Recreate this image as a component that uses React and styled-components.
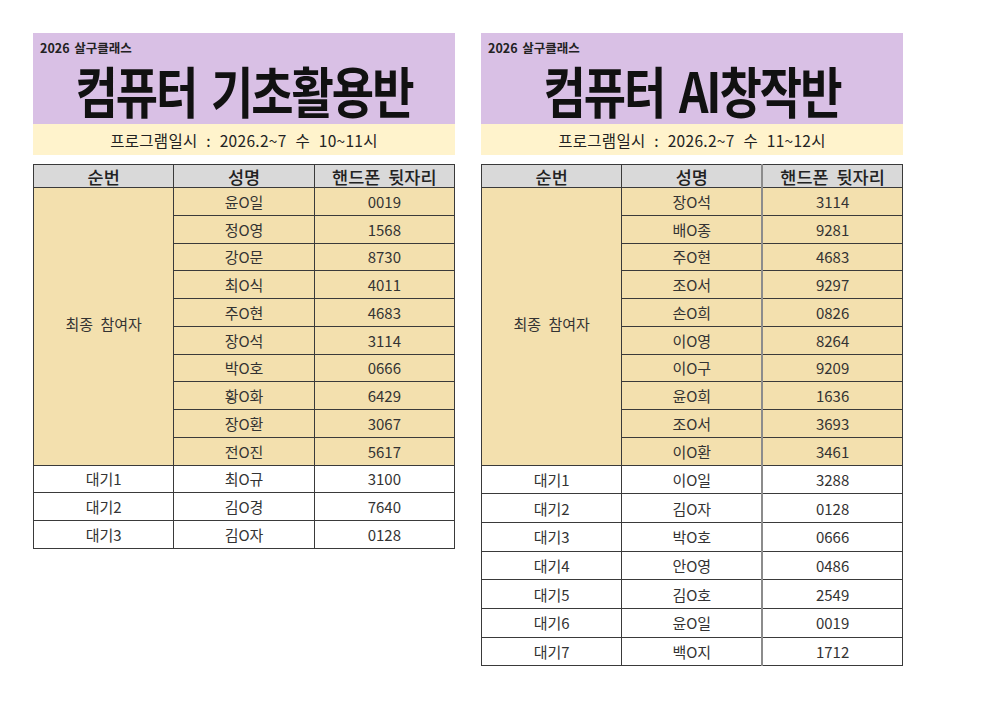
import React from 'react'
import styled, { createGlobalStyle } from 'styled-components'

const Global = createGlobalStyle`
  html, body { margin: 0; padding: 0; background: #fff; }
  body { font-family: "Noto Sans CJK KR", "Noto Sans", sans-serif; color: #222; }
`

const Page = styled.div`
  display: flex;
  gap: 26px;
  padding: 33px 0 0 33px;
  align-items: flex-start;
`

const Panel = styled.section`
  width: 422px;
  display: flex;
  flex-direction: column;
`

const Banner = styled.div`
  background: #d9c0e5;
  height: 91px;
  display: flex;
  flex-direction: column;
  align-items: center;
`

const Small = styled.div`
  align-self: flex-start;
  margin: 8px 0 0 7px;
  font-size: 12.5px;
  line-height: 14px;
  font-weight: 700;
  color: #222;
  word-spacing: 2px;
`

const Title = styled.h1`
  margin: 13px 0 0;
  font-size: 46px;
  font-weight: 700;
  color: #111;
  letter-spacing: -2px;
  word-spacing: 6px;
  line-height: 42px;
  transform: scaleY(1.19);
  white-space: pre;
`

const Schedule = styled.div`
  background: #fff3cc;
  height: 31px;
  display: flex;
  align-items: center;
  justify-content: center;
  font-size: 15.5px;
  letter-spacing: 0.3px;
  word-spacing: 5px;
  color: #222;
  white-space: pre;
`

const Table = styled.table`
  margin-top: 9px;
  width: 100%;
  border-collapse: collapse;
  table-layout: fixed;
  border: 1px solid #3a3a3a;
`

const Head = styled.th`
  background: #d9d9d9;
  height: 22px;
  font-size: 17.5px;
  font-weight: 500;
  padding: 0;
  border: 1px solid #3a3a3a;
  border-left-color: ${(p) => (p.$soft ? '#8c8c8c' : '#3a3a3a')};
  border-left-width: ${(p) => (p.$soft ? '2px' : '1px')};
  color: #222;
  white-space: pre;
  line-height: 21px;
`

const Cell = styled.td`
  background: ${(p) => (p.$final ? '#f3e0ae' : '#fff')};
  height: ${(p) => p.$h}px;
  padding: 0;
  text-align: center;
  font-size: 15px;
  color: #333;
  border: 1px solid #3a3a3a;
  border-left-color: ${(p) => (p.$soft ? '#8c8c8c' : '#3a3a3a')};
  border-left-width: ${(p) => (p.$soft ? '2px' : '1px')};
  white-space: pre;
`

const Group = styled.td`
  background: #f3e0ae;
  text-align: center;
  vertical-align: middle;
  font-size: 15px;
  word-spacing: 4px;
  color: #333;
  border: 1px solid #3a3a3a;
  padding: 0 0 6px;
  white-space: pre;
`

const classes = [
  {
    title: '컴퓨터 기초활용반',
    time: '프로그램일시 : 2026.2~7 수 10~11시',
    soft: false,
    waitH: 26.75,
    final: [
      ['윤O일', '0019'], ['정O영', '1568'], ['강O문', '8730'], ['최O식', '4011'],
      ['주O현', '4683'], ['장O석', '3114'], ['박O호', '0666'], ['황O화', '6429'],
      ['장O환', '3067'], ['전O진', '5617'],
    ],
    wait: [['최O규', '3100'], ['김O경', '7640'], ['김O자', '0128']],
  },
  {
    title: '컴퓨터 AI창작반',
    time: '프로그램일시 : 2026.2~7 수 11~12시',
    soft: true,
    waitH: 27.7,
    final: [
      ['장O석', '3114'], ['배O종', '9281'], ['주O현', '4683'], ['조O서', '9297'],
      ['손O희', '0826'], ['이O영', '8264'], ['이O구', '9209'], ['윤O희', '1636'],
      ['조O서', '3693'], ['이O환', '3461'],
    ],
    wait: [
      ['이O일', '3288'], ['김O자', '0128'], ['박O호', '0666'], ['안O영', '0486'],
      ['김O호', '2549'], ['윤O일', '0019'], ['백O지', '1712'],
    ],
  },
]

const ClassSheet = ({ c }) => (
  <Panel>
    <Banner>
      <Small>2026 살구클래스</Small>
      <Title>{c.title}</Title>
    </Banner>
    <Schedule>{c.time}</Schedule>
    <Table>
      <thead>
        <tr>
          <Head>순번</Head>
          <Head>성명</Head>
          <Head $soft={c.soft}>핸드폰  뒷자리</Head>
        </tr>
      </thead>
      <tbody>
        {c.final.map(([name, num], i) => (
          <tr key={'f' + i}>
            {i === 0 && <Group rowSpan={c.final.length}>최종 참여자</Group>}
            <Cell $final $h={26.75}>{name}</Cell>
            <Cell $final $h={26.75} $soft={c.soft}>{num}</Cell>
          </tr>
        ))}
        {c.wait.map(([name, num], i) => (
          <tr key={'w' + i}>
            <Cell $h={c.waitH}>대기{i + 1}</Cell>
            <Cell $h={c.waitH}>{name}</Cell>
            <Cell $h={c.waitH} $soft={c.soft}>{num}</Cell>
          </tr>
        ))}
      </tbody>
    </Table>
  </Panel>
)

export default function App() {
  return (
    <>
      <Global />
      <Page>
        {classes.map((c) => (
          <ClassSheet key={c.title} c={c} />
        ))}
      </Page>
    </>
  )
}
